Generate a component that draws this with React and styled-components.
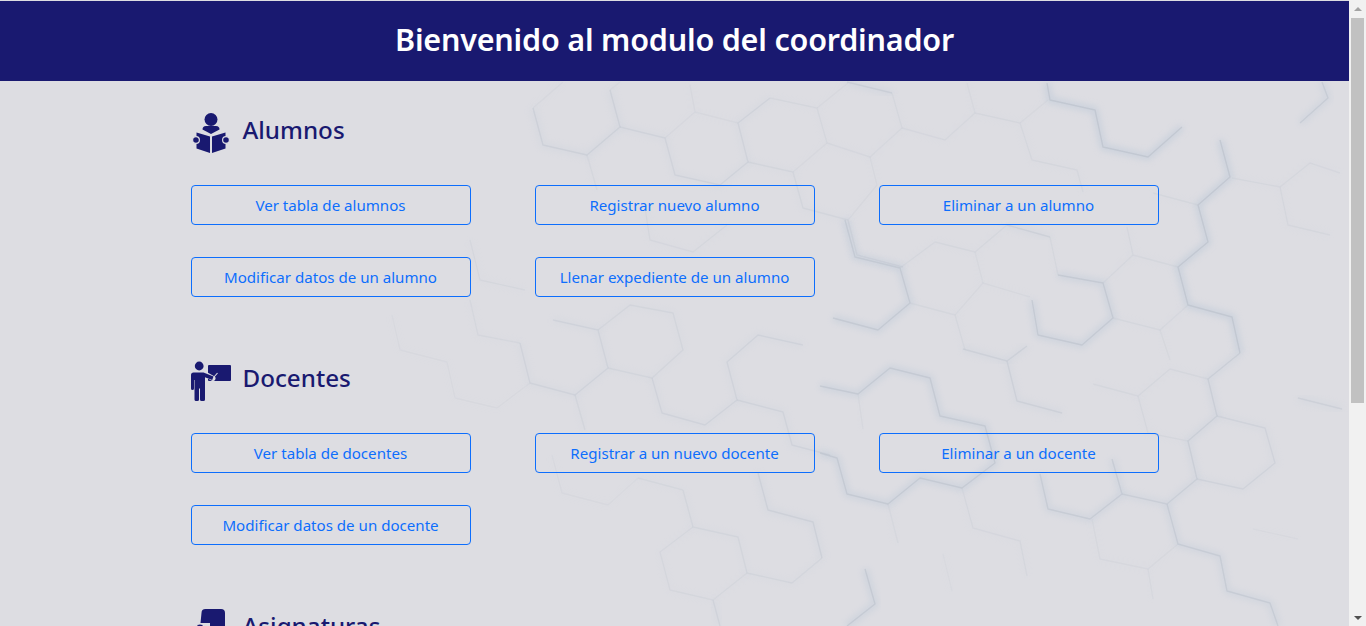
import styled, { createGlobalStyle } from "styled-components";

const navy = "#191970";
const blue = "#0d6efd";
const paper = "#dddde2";

const GlobalStyle = createGlobalStyle`
  html {
    scrollbar-width: none;
  }
  body {
    margin: 0;
    background-color: ${paper};
    font-family: "Noto Sans", "Open Sans", sans-serif;
  }
`;

const Page = styled.div`
  position: relative;
  margin-right: 17px;
  padding-top: 1px;
  overflow: hidden;
`;

const Backdrop = styled.svg`
  position: absolute;
  top: 0;
  left: 0;
  width: 1366px;
  height: 626px;
`;

const ScrollBar = styled.div`
  position: fixed;
  top: 0;
  right: 0;
  bottom: 0;
  display: flex;
  flex-direction: column;
  align-items: center;
  width: 17px;
  background-color: #f1f1f1;
`;

const ScrollArrow = styled.div`
  flex: none;
  display: flex;
  align-items: center;
  justify-content: center;
  height: 17px;
`;

const ScrollTrack = styled.div`
  flex: 1;
  padding-top: 1px;
`;

const ScrollThumb = styled.div`
  width: 13px;
  height: 385px;
  background-color: #c1c1c1;
`;

const ArrowUp = styled.div`
  width: 0;
  height: 0;
  border-left: 4px solid transparent;
  border-right: 4px solid transparent;
  border-bottom: 4px solid #a3a3a3;
`;

const ArrowDown = styled.div`
  width: 0;
  height: 0;
  border-left: 4px solid transparent;
  border-right: 4px solid transparent;
  border-top: 4px solid #505050;
`;

const Header = styled.header`
  position: relative;
  display: flex;
  align-items: center;
  justify-content: center;
  height: 80px;
  background-color: ${navy};
`;

const Title = styled.h1`
  margin: 0 0 5px;
  color: white;
  font-size: 30.5px;
  font-weight: 600;
  letter-spacing: -0.2px;
`;

const Main = styled.main`
  position: relative;
  display: flex;
  flex-direction: column;
  gap: 64px;
  width: 968px;
  margin: 0 auto;
  padding: 32px 0 97px;
`;

const Section = styled.section`
  display: flex;
  flex-direction: column;
  gap: 32px;
`;

const SectionHead = styled.div`
  display: flex;
  align-items: center;
  gap: 12px;
  height: 40px;
`;

const SectionTitle = styled.h2`
  margin: 0 0 7px;
  color: ${navy};
  font-size: 24.2px;
  font-weight: 500;
  line-height: 34px;
`;

const IconBox = styled.svg`
  display: block;
  width: 40px;
  height: 40px;
  fill: ${navy};
`;

const Buttons = styled.div`
  display: grid;
  grid-template-columns: repeat(3, 280px);
  gap: 32px 64px;
`;

const Button = styled.button`
  height: 40px;
  padding: 0;
  border: 1px solid ${blue};
  border-radius: 4px;
  background: transparent;
  color: ${blue};
  font-family: inherit;
  font-size: 15.1px;
  cursor: pointer;
`;

const ReaderIcon = () => (
  <IconBox viewBox="0 0 40 40">
    <circle cx="20" cy="6.5" r="6.5" />
    <path d="M11.5 16.5 Q11.5 13 15 13 H25 Q28.5 13 28.5 16.5 L20 21 Z" />
    <path d="M5.5 19.5 L19 23.5 V40 L5.5 35.5 Z" />
    <path d="M34.5 19.5 L21 23.5 V40 L34.5 35.5 Z" />
    <circle cx="5" cy="27" r="3.4" stroke={paper} strokeWidth="1.2" />
    <circle cx="35" cy="27" r="3.4" stroke={paper} strokeWidth="1.2" />
  </IconBox>
);

const TeacherIcon = () => (
  <IconBox viewBox="0 0 40 40">
    <rect x="17" y="4" width="23" height="16" rx="1" />
    <path d="M14 13 L22 17.5" stroke={paper} strokeWidth="5" strokeLinecap="round" fill="none" />
    <path d="M23 16 L26.5 12" stroke={paper} strokeWidth="1.1" fill="none" />
    <circle cx="8.2" cy="5" r="4.4" />
    <path d="M2.5 11.5 H12.5 L22.5 15.5 L21.2 19 L14 16.2 V38.5 Q14 40 12.5 40 H10.5 Q9 40 9 38.5 V27.5 H8 V38.5 Q8 40 6.5 40 H5 Q3.5 40 3.5 38.5 V19 H3 V27.5 Q3 29 1.5 29 Q0 29 0 27.5 V14 Q0 11.5 2.5 11.5 Z" />
  </IconBox>
);

const SubjectIcon = () => (
  <IconBox viewBox="0 0 40 40">
    <path d="M10.5 4 Q10.5 0 14.5 0 H30 Q34 0 34 4 V22 Q34 26 30 26 H19 V14 H9.5 Z" />
    <circle cx="9" cy="20" r="5" stroke={paper} strokeWidth="1.2" />
    <path d="M2 40 V33 Q2 28 7 28 H16 V40 Z" />
  </IconBox>
);

// shadow lines of the hexagon wallpaper, in page coordinates
const hexEdges = [
  { o: 1, p: "1047,83 1050,100 1095,110 1103,147 1148,157 1182,127" },
  { o: 1, p: "1220,140 1230,177 1198,205 1208,242 1178,267 1188,305 1232,317 1240,353" },
  { o: 0.9, p: "845,220 855,257 900,268 910,303 878,330 833,318" },
  { o: 0.6, p: "1007,225 1050,237" },
  { o: 0.9, p: "1032,300 1038,335 1082,345 1113,318 1103,283 1058,275" },
  { o: 0.8, p: "1300,123 1328,98 1322,82" },
  { o: 0.7, p: "847,82 892,93" },
  { o: 0.9, p: "820,453 837,458 847,494 888,504 920,478 962,488 995,463 985,426 940,416 930,378 890,368 858,394 820,386" },
  { o: 0.8, p: "1112,459 1122,494 1090,519 1048,509 1040,474" },
  { o: 0.7, p: "1122,494 1167,504 1197,479 1188,441 1217,416 1208,379 1240,353" },
  { o: 0.5, p: "1217,416 1265,428 1275,463 1243,489 1197,479" },
  { o: 0.8, p: "1167,504 1178,544 1220,556 1227,591 1270,603 1278,626" },
  { o: 0.9, p: "865,569 875,604 847,626" },
  { o: 0.6, p: "1007,361 1017,401 1062,413" },
  { o: 0.6, p: "963,349 1007,361 1027,346" },
  { o: 0.6, p: "1298,398 1342,409" },
  { o: 0.5, p: "520,343 530,383 575,395 608,368 598,330 553,320" },
  { o: 0.4, p: "598,330 630,305 673,313 683,350 652,378 608,368" },
  { o: 0.5, p: "652,378 662,413 705,425 737,400 727,362 758,335 803,345" },
  { o: 0.5, p: "737,400 783,412 792,445 830,455" },
  { o: 0.4, p: "575,395 585,430" },
  { o: 0.6, p: "758,473 768,510 813,522 822,558" },
  { o: 0.4, p: "683,490 693,527 738,537 747,573 792,583 822,558" },
  { o: 0.3, p: "693,527 660,552 670,590 713,600 747,573" },
  { o: 0.5, p: "713,600 720,626" },
  { o: 0.3, p: "638,478 683,490" },
  { o: 0.2, p: "638,478 608,505 562,493 552,455" },
  { o: 0.3, p: "470,300 478,335 520,343" },
  { o: 0.2, p: "392,315 400,350 447,362 455,398 497,408 530,383" },
  { o: 0.6, p: "533,108 543,145 587,155 620,127 610,90" },
  { o: 0.3, p: "587,155 597,190" },
  { o: 0.5, p: "620,127 665,138 675,175 720,185 748,162 738,123 770,98" },
  { o: 0.4, p: "748,162 793,172 803,208 848,220" },
  { o: 0.5, p: "848,220 857,255 903,267" },
  { o: 0.3, p: "645,208 650,240 693,252 727,225" },
  { o: 0.3, p: "470,240 480,280 525,290" },
  // faint edges
  { o: 0.25, p: "533,108 563,82" },
  { o: 0.25, p: "610,90 620,82" },
  { o: 0.25, p: "690,85 695,112 665,138" },
  { o: 0.25, p: "695,112 738,123" },
  { o: 0.3, p: "770,98 817,108 827,143 870,157 902,128 892,93" },
  { o: 0.25, p: "827,143 793,172" },
  { o: 0.25, p: "817,108 848,83" },
  { o: 0.25, p: "870,157 877,185 848,220" },
  { o: 0.3, p: "902,128 945,140 975,113 1020,123 1032,160 1077,170 1083,192" },
  { o: 0.25, p: "975,113 967,83" },
  { o: 0.25, p: "1020,123 1048,100" },
  { o: 0.3, p: "1198,205 1153,193" },
  { o: 0.3, p: "935,242 900,268" },
  { o: 0.3, p: "935,242 975,252 1007,225" },
  { o: 0.25, p: "975,252 983,283" },
  { o: 0.3, p: "1050,237 1058,275" },
  { o: 0.3, p: "1178,267 1133,255 1127,227" },
  { o: 0.3, p: "1103,283 1133,255" },
  { o: 0.3, p: "1113,318 1160,330 1188,305" },
  { o: 0.25, p: "1160,330 1170,360" },
  { o: 0.3, p: "910,303 955,315 965,350" },
  { o: 0.25, p: "955,315 983,283 1030,297" },
  { o: 0.3, p: "1232,178 1280,187 1288,225 1330,235" },
  { o: 0.3, p: "1280,187 1310,163 1340,173" },
  { o: 0.3, p: "1093,384 1138,396 1170,369 1208,379" },
  { o: 0.3, p: "1138,396 1148,433 1188,441" },
  { o: 0.25, p: "858,394 863,429" },
  { o: 0.3, p: "888,504 898,543" },
  { o: 0.3, p: "962,488 973,528 1020,541 1027,576" },
  { o: 0.25, p: "1092,519 1100,559 1148,569 1178,544" },
  { o: 0.25, p: "1148,569 1153,599" },
  { o: 0.2, p: "943,554 952,591" },
  { o: 0.2, p: "1253,529 1298,539" },
];

const Wallpaper = () => (
  <Backdrop viewBox="0 0 1366 626">
    <defs>
      <filter id="soft" x="-20%" y="-20%" width="140%" height="140%">
        <feGaussianBlur stdDeviation="3" />
      </filter>
      <filter id="line" x="-20%" y="-20%" width="140%" height="140%">
        <feGaussianBlur stdDeviation="0.6" />
      </filter>
    </defs>
    {hexEdges.map(({ o, p }) => (
      <g key={p} fill="none" strokeLinejoin="round">
        <polyline points={p} stroke="#bdc9d8" strokeWidth="7" opacity={o * o * 0.55} filter="url(#soft)" />
        <polyline points={p} stroke="#bcc2cc" strokeWidth="1.4" opacity={o * 0.65} filter="url(#line)" />
      </g>
    ))}
  </Backdrop>
);

const sections = [
  {
    title: "Alumnos",
    icon: <ReaderIcon />,
    actions: [
      "Ver tabla de alumnos",
      "Registrar nuevo alumno",
      "Eliminar a un alumno",
      "Modificar datos de un alumno",
      "Llenar expediente de un alumno",
    ],
  },
  {
    title: "Docentes",
    icon: <TeacherIcon />,
    actions: [
      "Ver tabla de docentes",
      "Registrar a un nuevo docente",
      "Eliminar a un docente",
      "Modificar datos de un docente",
    ],
  },
  {
    title: "Asignaturas",
    icon: <SubjectIcon />,
    actions: [
      "Ver tabla de asignaturas",
      "Registrar nueva asignatura",
      "Eliminar una asignatura",
      "Modificar datos de una asignatura",
      "Asignar docente",
      "Ver horarios",
      "Ver grupos",
    ],
  },
];

const App = () => (
  <Page>
    <GlobalStyle />
    <Wallpaper />
    <Header>
      <Title>Bienvenido al modulo del coordinador</Title>
    </Header>
    <Main>
      {sections.map((section) => (
        <Section key={section.title}>
          <SectionHead>
            {section.icon}
            <SectionTitle>{section.title}</SectionTitle>
          </SectionHead>
          <Buttons>
            {section.actions.map((action) => (
              <Button key={action}>{action}</Button>
            ))}
          </Buttons>
        </Section>
      ))}
    </Main>
    <ScrollBar>
      <ScrollArrow>
        <ArrowUp />
      </ScrollArrow>
      <ScrollTrack>
        <ScrollThumb />
      </ScrollTrack>
      <ScrollArrow>
        <ArrowDown />
      </ScrollArrow>
    </ScrollBar>
  </Page>
);

export default App;
